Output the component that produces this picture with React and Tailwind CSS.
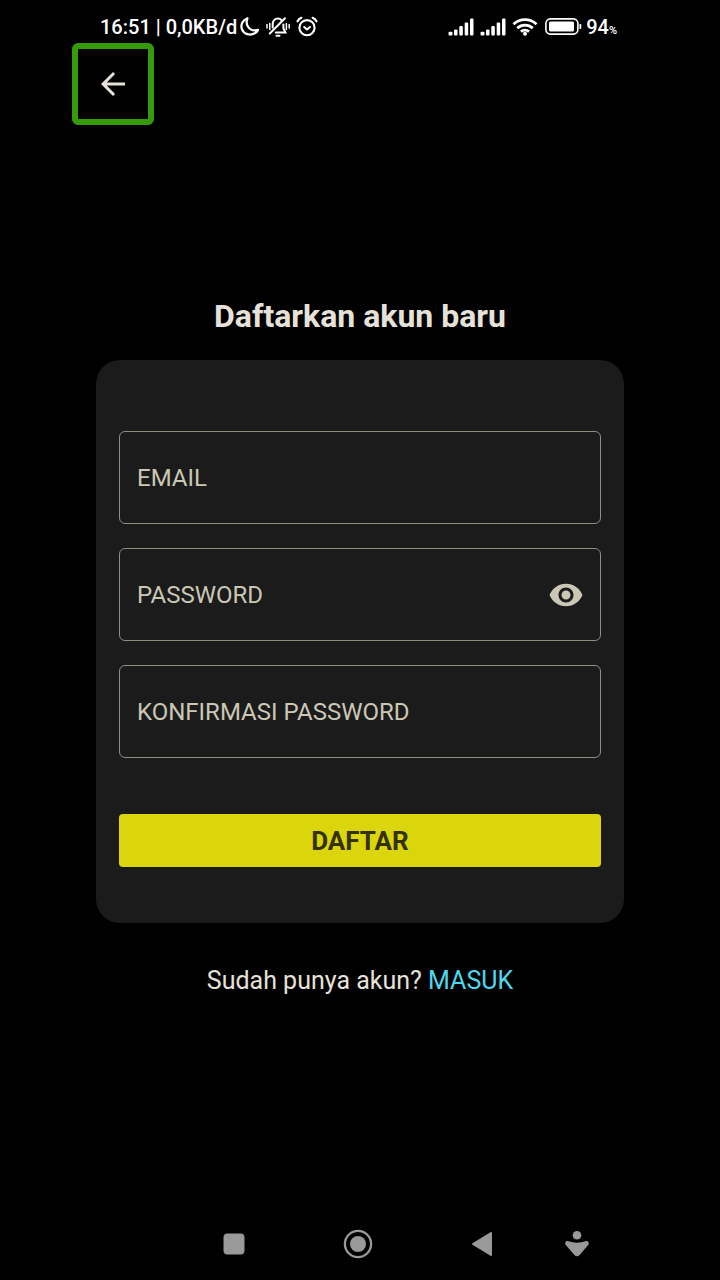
import React, { useState } from "react";

function MoonIcon() {
  return (
    <svg viewBox="0 0 20 22" className="h-[22px] w-5" fill="none" stroke="currentColor" strokeWidth="2.200" strokeLinejoin="round" aria-hidden="true">
      <path d="M7.500 2.200C2.600 3.800 .2 8.800 2 13.300c2 4.900 8.100 6.700 12.800 4 1.500-.9 2.600-2 3.300-3.400-4.200 1.200-8.300-.2-10.200-3.400-1.600-2.700-1.600-5.600-.4-8.300z" />
    </svg>
  );
}

function MutedBellIcon() {
  return (
    <svg viewBox="0 0 24 22" className="h-[22px] w-6" fill="none" stroke="currentColor" strokeWidth="2" strokeLinecap="round" aria-hidden="true">
      <path d="M15.300 4C14.400 3 13.300 2.500 12 2.500c-3.300 0-5.300 2.500-5.300 5.800v3.200M17.400 8.500v3.800l2 4.200H9.800M3.800 17.500 19 2.200" />
      <path d="M10.500 19.800h3" />
      <path d="M1 8.500v3.500M3.800 7.500v6M20.400 7.500v6M23.200 8.500v3.500" strokeWidth="1.500" />
    </svg>
  );
}

function AlarmIcon() {
  return (
    <svg viewBox="0 0 22 22" className="h-[22px] w-[22px]" fill="none" stroke="currentColor" strokeWidth="2.100" strokeLinecap="round" strokeLinejoin="round" aria-hidden="true">
      <circle cx="11" cy="11.700" r="7.600" />
      <path d="m8.200 11 2.800 2.500 3-2.500M1.500 5.300C2.300 3.800 3.600 2.500 5.400 1.800M20.500 5.300C19.700 3.800 18.400 2.500 16.600 1.800" />
    </svg>
  );
}

function SignalIcon() {
  return (
    <svg viewBox="0 0 26 18" className="h-[18px] w-[26px]" fill="currentColor" aria-hidden="true">
      <rect x="0.500" y="13.800" width="4" height="3.700" rx="1" />
      <rect x="6" y="11.500" width="3.500" height="6" rx="1" />
      <rect x="11.300" y="8" width="3.500" height="9.500" rx="1" />
      <rect x="16.700" y="4.500" width="3.500" height="13" rx="1" />
      <rect x="22" y="0.500" width="3.500" height="17" rx="1" />
    </svg>
  );
}

function WifiIcon() {
  return (
    <svg viewBox="0 0 26 18" className="h-[18px] w-[26px]" fill="none" stroke="currentColor" strokeWidth="2.800" aria-hidden="true">
      <path d="M1.500 6.200c6.600-6 16.400-6 23 0M5.200 10.100c4.500-4 11.100-4 15.600 0M8.900 13.700c2.400-2 5.800-2 8.200 0" />
      <circle cx="13" cy="15.700" r="2" fill="currentColor" stroke="none" />
    </svg>
  );
}

function BatteryIcon() {
  return (
    <svg viewBox="0 0 37 17" className="h-[17px] w-[37px]" aria-hidden="true">
      <rect x="0.900" y="0.900" width="32" height="15.200" rx="4.500" fill="none" stroke="currentColor" strokeWidth="1.600" />
      <rect x="4" y="3.500" width="25" height="10" rx="1.500" fill="currentColor" />
      <path d="M34.500 6h.8q1 0 1 1v3q0 1-1 1h-.8z" fill="currentColor" />
    </svg>
  );
}

function StatusBar() {
  return (
    <header className="flex h-[43px] items-center justify-between pt-2.5 pr-[31px] pl-7 text-xl leading-8 font-medium text-white">
      <div className="flex items-center gap-[3px]">
        <span>16:51 | 0,0KB/d</span>
        <div className="flex items-center gap-1.5">
          <MoonIcon />
          <MutedBellIcon />
          <AlarmIcon />
        </div>
      </div>
      <div className="flex items-center gap-1.5">
        <SignalIcon />
        <SignalIcon />
        <WifiIcon />
        <div className="flex items-center gap-1 pl-px">
          <BatteryIcon />
          <span>
            94<span className="text-[11px] leading-none">%</span>
          </span>
        </div>
      </div>
    </header>
  );
}

function Field({ label, type, autoComplete, children }) {
  return (
    <div className="flex h-[93px] items-center rounded-md border border-[#8f8d80] pr-4 pl-[17px] focus-within:border-[#dad60b]">
      <input
        type={type}
        aria-label={label}
        placeholder={label}
        autoComplete={autoComplete}
        className="min-w-0 flex-1 bg-transparent text-2xl text-[#e6e2d9] outline-none placeholder:text-[#cac7b5]"
      />
      {children}
    </div>
  );
}

function NavigationBar() {
  return (
    <nav className="flex h-[72px] items-center justify-end pr-[55px] text-[#999999]">
      <div className="flex gap-[92px]">
        <button type="button" aria-label="Recents">
          <svg viewBox="0 0 32 32" className="size-8" fill="currentColor">
            <rect x="5.500" y="5.500" width="21" height="21" rx="4" />
          </svg>
        </button>
        <button type="button" aria-label="Home">
          <svg viewBox="0 0 32 32" className="size-8">
            <circle cx="16" cy="16" r="13.100" fill="none" stroke="currentColor" strokeWidth="2.300" />
            <circle cx="16" cy="16" r="8" fill="currentColor" />
          </svg>
        </button>
        <button type="button" aria-label="Back">
          <svg viewBox="0 0 32 32" className="size-8" fill="currentColor" stroke="currentColor" strokeWidth="2" strokeLinejoin="round">
            <path d="M7 16 25 5v22z" />
          </svg>
        </button>
      </div>
      <button type="button" aria-label="Accessibility" className="ml-[63px]">
        <svg viewBox="0 0 32 32" className="size-8" fill="currentColor">
          <circle cx="16" cy="7.300" r="4.300" />
          <path d="M4.400 14.400c.5-1.400 1.700-1.700 3.100-1.200 5.600 1.900 11.400 1.900 17 0 1.400-.5 2.600-.2 3.100 1.200.4 1.100.1 2-.6 2.800L18.600 27c-1.600 1.700-3.600 1.700-5.200 0L5 17.200c-.7-.8-1-1.700-.6-2.800z" />
        </svg>
      </button>
    </nav>
  );
}

export default function App() {
  const [visible, setVisible] = useState(false);
  const passwordType = visible ? "text" : "password";

  return (
    <div className="min-h-screen bg-black font-['Roboto',sans-serif]">
      <div className="flex min-h-screen flex-col px-[72px]">
        <StatusBar />
        <button
          type="button"
          aria-label="Kembali"
          className="flex size-[82px] shrink-0 items-center justify-center rounded-md border-6 border-[#359b0d] text-[#e6e2d9]"
        >
          <svg viewBox="0 0 24 24" className="size-9" fill="currentColor">
            <path d="M20 11H7.830l5.590-5.590L12 4l-8 8 8 8 1.410-1.410L7.830 13H20v-2z" />
          </svg>
        </button>

        <main className="flex flex-1 flex-col justify-center px-6 pb-10">
          <h1 className="text-center text-[32px] leading-10 font-bold text-[#e6e2d9]">Daftarkan akun baru</h1>
          <form
            className="mt-6 flex flex-col rounded-3xl bg-[#1b1b1b] px-[23px] pt-[71px] pb-14"
            onSubmit={(event) => event.preventDefault()}
          >
            <div className="flex flex-col gap-6">
              <Field label="EMAIL" type="email" autoComplete="email" />
              <Field label="PASSWORD" type={passwordType} autoComplete="new-password">
                <button
                  type="button"
                  aria-label="Tampilkan password"
                  aria-pressed={visible}
                  onClick={() => setVisible(!visible)}
                  className="text-[#cac7b5]"
                >
                  <svg viewBox="0 0 24 24" className="size-9" fill="currentColor">
                    <path d="M12 4.500C7 4.500 2.730 7.610 1 12c1.730 4.390 6 7.500 11 7.500s9.270-3.110 11-7.500c-1.730-4.390-6-7.500-11-7.500zM12 17c-2.760 0-5-2.240-5-5s2.240-5 5-5 5 2.240 5 5-2.240 5-5 5zm0-8c-1.660 0-3 1.340-3 3s1.340 3 3 3 3-1.340 3-3-1.340-3-3-3z" />
                  </svg>
                </button>
              </Field>
              <Field label="KONFIRMASI PASSWORD" type={passwordType} autoComplete="new-password" />
            </div>
            <button type="submit" className="mt-14 h-[53px] rounded-sm bg-[#dad60b] pt-0.5 text-[26px] font-bold text-[#343200]">
              DAFTAR
            </button>
          </form>
          <p className="mt-[42px] text-center text-[25px] leading-8 text-[#e6e2d9]">
            Sudah punya akun?{" "}
            <a href="#masuk" className="text-[#4dd8f0]">
              MASUK
            </a>
          </p>
        </main>

        <NavigationBar />
      </div>
    </div>
  );
}
